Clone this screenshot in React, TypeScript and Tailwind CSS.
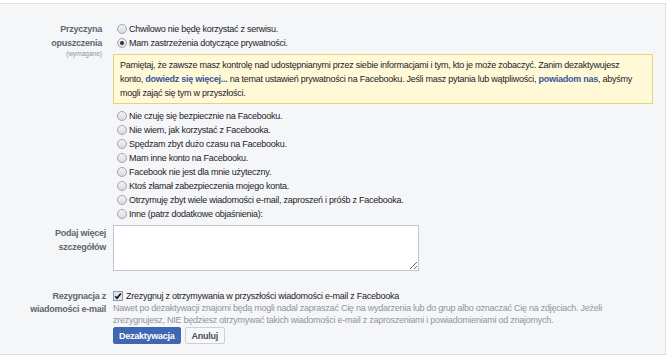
import React from "react";

const FONT = "font-['Liberation_Sans',Arial,sans-serif]";

function Radio({ checked = false }: { checked?: boolean }) {
  return (
    <span className="ml-[4px] mr-[2px] flex h-[10px] w-[10px] shrink-0 items-center justify-center rounded-full border border-[#a3a6ab] bg-gradient-to-b from-[#f4f4f4] to-[#d9dadc]">
      {checked && <span className="h-[4px] w-[4px] rounded-full bg-[#333]" />}
    </span>
  );
}

function RadioRow({ label, checked }: { label: string; checked?: boolean }) {
  return (
    <div className="flex h-[14px] items-center whitespace-nowrap">
      <Radio checked={checked} />
      <span>{label}</span>
    </div>
  );
}

function Checkbox() {
  return (
    <svg width="10" height="10" viewBox="0 0 10 10" className="mr-[3px] shrink-0">
      <rect x="0.5" y="0.5" width="9" height="9" fill="#dde4ec" stroke="#8a9bb0" />
      <path d="M2.2 5.2 L4 7.2 L7.8 2.4" fill="none" stroke="#111" strokeWidth="1.6" />
    </svg>
  );
}

export default function App() {
  const reasons = [
    "Nie czuję się bezpiecznie na Facebooku.",
    "Nie wiem, jak korzystać z Facebooka.",
    "Spędzam zbyt dużo czasu na Facebooku.",
    "Mam inne konto na Facebooku.",
    "Facebook nie jest dla mnie użyteczny.",
    "Ktoś złamał zabezpieczenia mojego konta.",
    "Otrzymuję zbyt wiele wiadomości e-mail, zaproszeń i próśb z Facebooka.",
    "Inne (patrz dodatkowe objaśnienia):",
  ];
  return (
    <div className={`h-[361px] w-[670px] overflow-hidden bg-white ${FONT} text-[9px] leading-[14px] tracking-[-0.25px] text-[#1d2129]`}>
      <div className="mt-[3px] h-[352px] w-[666px] border-b border-r border-t border-[#dddfe2] bg-[#f5f6f7] pt-[18px]">
        {/* Reason row */}
        <div className="flex">
          <div className="w-[113px] shrink-0 pr-[11px] text-right font-bold text-[#606770]">
            <div>Przyczyna</div>
            <div>opuszczenia</div>
            <div className="text-[6.5px] font-normal leading-[8px] tracking-normal text-[#90949c]">(wymagane)</div>
          </div>
          <div className="w-[540px]">
            <RadioRow label="Chwilowo nie będę korzystać z serwisu." />
            <RadioRow label="Mam zastrzeżenia dotyczące prywatności." checked />
            <div className="mt-[4px] whitespace-nowrap border border-[#e6d47a] bg-[#fff9d7] px-[6px] py-[3px] text-[#1d2129]">
              Pamiętaj, że zawsze masz kontrolę nad udostępnianymi przez siebie informacjami i tym, kto je może zobaczyć. Zanim dezaktywujesz
              <br />
              konto, <span className="font-bold text-[#365899]">dowiedz się więcej...</span> na temat ustawień prywatności na Facebooku. Jeśli masz pytania lub wątpliwości,{" "}
              <span className="font-bold text-[#365899]">powiadom nas</span>, abyśmy
              <br />
              mogli zająć się tym w przyszłości.
            </div>
            <div className="mt-[5px]">
              {reasons.map((r) => (
                <RadioRow key={r} label={r} />
              ))}
            </div>
          </div>
        </div>

        {/* Details row */}
        <div className="mt-[4px] flex">
          <div className="w-[113px] shrink-0 pr-[7px] pt-[1px] text-right font-bold text-[#606770]">
            <div>Podaj więcej</div>
            <div>szczegółów</div>
          </div>
          <textarea className="h-[46px] w-[306px] resize border border-[#bdc7d8] bg-white outline-none" />
        </div>

        {/* Email row */}
        <div className="mt-[19px] flex">
          <div className="w-[113px] shrink-0 pr-[7px] text-right font-bold leading-[13px] text-[#606770]">
            <div>Rezygnacja z</div>
            <div>wiadomości e-mail</div>
          </div>
          <div className="flex flex-col">
            <div className="flex h-[12px] items-center whitespace-nowrap">
              <Checkbox />
              <span>Zrezygnuj z otrzymywania w przyszłości wiadomości e-mail z Facebooka</span>
            </div>
            <div className="whitespace-nowrap leading-[12px] text-[#90949c]">
              Nawet po dezaktywacji znajomi będą mogli nadal zapraszać Cię na wydarzenia lub do grup albo oznaczać Cię na zdjęciach. Jeżeli
              <br />
              zrezygnujesz, NIE będziesz otrzymywać takich wiadomości e-mail z zaproszeniami i powiadomieniami od znajomych.
            </div>
            <div className="mt-[1px] flex gap-[4px]">
              <button className="flex h-[17px] items-center rounded-[2px] border border-[#4267b2] bg-[#4267b2] px-[5px] font-bold text-white">
                Dezaktywacja
              </button>
              <button className="flex h-[17px] items-center rounded-[2px] border border-[#ced0d4] bg-[#f6f7f9] px-[6px] font-bold text-[#4b4f56]">
                Anuluj
              </button>
            </div>
          </div>
        </div>
      </div>
    </div>
  );
}
